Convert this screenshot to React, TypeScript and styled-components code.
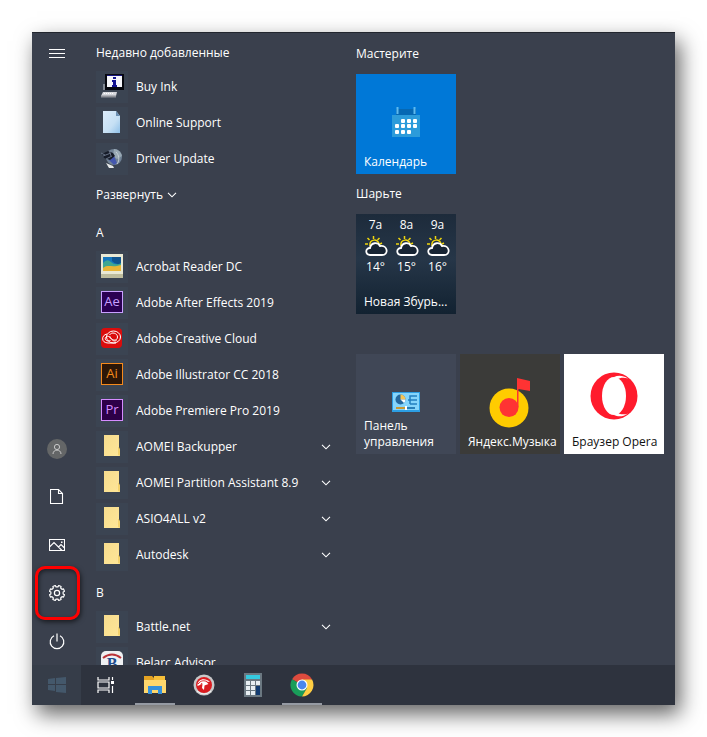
import React from "react";
import styled, { createGlobalStyle } from "styled-components";

const GlobalStyle = createGlobalStyle`
  * { box-sizing: border-box; }
  body { margin: 0; background: #fff; }
  button { font: inherit; color: inherit; border: 0; padding: 0; margin: 0; background: none; cursor: pointer; }
  h2, h3, ul, p { margin: 0; padding: 0; font-weight: 400; font-size: 12px; list-style: none; }
  svg { display: block; flex: none; }
`;

const Desktop = styled.main`
  height: 100vh;
  padding: 32px;
  overflow: hidden;
  font-family: "Open Sans", "Noto Sans", sans-serif;
  font-size: 12px;
  line-height: 16px;
  color: #fff;
`;

const Shell = styled.div`
  height: 100%;
  display: flex;
  flex-direction: column;
  background: #3a404d;
  box-shadow: 5px 9px 20px 0 rgba(0, 0, 0, 0.62);
`;

const StartMenu = styled.div`
  flex: 1;
  min-height: 0;
  display: grid;
  grid-template-columns: 50px 273px 1fr;
  border-top: 1px solid #22262e;
  overflow: hidden;
`;

const Rail = styled.nav`
  display: flex;
  flex-direction: column;
  justify-content: space-between;
  min-height: 0;
`;

const RailGroup = styled.div`
  display: flex;
  flex-direction: column;
`;

const RailButton = styled.button<{ $highlight?: boolean; $short?: boolean }>`
  position: relative;
  height: ${(p) => (p.$short ? 41 : 48)}px;
  display: flex;
  align-items: center;
  justify-content: center;
  ${(p) =>
    p.$highlight &&
    `&::after {
      content: "";
      position: absolute;
      inset: -3px 2px -3px 3px;
      border: 3px solid #f00;
      border-radius: 10px;
      box-shadow: 1px 2px 5px rgba(0, 0, 0, 0.6), inset 1px 2px 4px rgba(0, 0, 0, 0.5);
    }`}
`;

const AppList = styled.section`
  min-height: 0;
  overflow: hidden;
  padding-left: 14px;
`;

const ListHeading = styled.h2`
  height: 36px;
  display: flex;
  align-items: center;
  padding-top: 4px;
`;

const ExpandButton = styled.button`
  height: 36px;
  display: flex;
  align-items: center;
  gap: 4px;
`;

const AppRow = styled.button`
  width: 100%;
  height: 36px;
  display: flex;
  align-items: center;
  gap: 8px;
  padding-right: 24px;
  text-align: left;
`;

const IconPlate = styled.span`
  width: 32px;
  height: 32px;
  display: flex;
  align-items: center;
  justify-content: center;
  padding-bottom: 2px;
  background: #3b4452;
`;

const RowLabel = styled.span`
  flex: 1;
  white-space: nowrap;
`;

const AdobeBadge = styled.span<{ $fg: string; $bg: string }>`
  width: 22px;
  height: 22px;
  border: 1px solid ${(p) => p.$fg};
  background: ${(p) => p.$bg};
  color: ${(p) => p.$fg};
  font-size: 13px;
  line-height: 18px;
  text-align: center;
`;

const Tiles = styled.section`
  min-width: 0;
  padding: 1px 0 0 1px;
`;

const TileHeading = styled.h3`
  height: 40px;
  display: flex;
  align-items: center;
`;

const TileRow = styled.div`
  display: flex;
  gap: 4px;
`;

const Tile = styled.button<{ $bg: string; $dark?: boolean }>`
  width: 100px;
  height: 100px;
  display: flex;
  flex-direction: column;
  align-items: center;
  justify-content: flex-end;
  padding-bottom: 4px;
  background: ${(p) => p.$bg};
  color: ${(p) => (p.$dark ? "#111" : "#fff")};
`;

const TileArt = styled.span<{ $gap: number }>`
  flex: 1;
  display: flex;
  align-items: flex-end;
  padding-bottom: ${(p) => p.$gap}px;
`;

const TileLabel = styled.span`
  width: 100%;
  padding-left: 8px;
  text-align: left;
  white-space: pre;
`;

const Forecast = styled.span`
  width: 100%;
  flex: 1;
  display: grid;
  grid-template-columns: repeat(3, 31px);
  padding: 3px 4px 0;
`;

const Hour = styled.span`
  display: flex;
  flex-direction: column;
  align-items: center;
  gap: 2px;
`;

const Taskbar = styled.footer`
  flex: none;
  height: 40px;
  display: flex;
  background: #2e333e;
`;

const TaskButton = styled.button<{ $active?: boolean; $start?: boolean }>`
  width: 49px;
  display: flex;
  align-items: center;
  justify-content: center;
  background: ${(p) => (p.$start ? "#363d49" : "transparent")};
  position: relative;
  ${(p) =>
    p.$active &&
    `&::after {
      content: "";
      position: absolute;
      bottom: 0;
      left: 5px;
      right: 4px;
      height: 2px;
      background: #959aa3;
    }`}
`;

const Chevron = () => (
  <svg width="10" height="6" viewBox="0 0 10 6" fill="none" stroke="#fff" strokeWidth="1.1" aria-hidden="true">
    <path d="M1 .8 5 4.8 9 .8" />
  </svg>
);

const MenuIcon = () => (
  <svg width="16" height="12" viewBox="0 0 16 12" fill="none" stroke="#fff" aria-hidden="true">
    <path d="M0 1.5h16M0 5.5h16M0 9.5h16" />
  </svg>
);

const UserIcon = () => (
  <svg width="20" height="20" viewBox="0 0 20 20" fill="none" stroke="#c8c8c8" aria-hidden="true">
    <circle cx="10" cy="10" r="10" fill="#646667" stroke="none" />
    <circle cx="10" cy="8" r="2.6" />
    <path d="M6 15c0-5.2 8-5.2 8 0" />
  </svg>
);

const DocumentIcon = () => (
  <svg width="14" height="18" viewBox="0 0 14 18" fill="none" stroke="#fff" strokeWidth="1.1" aria-hidden="true">
    <path d="M.5 1.500h8l4 4v10H.5zM8.500 1.500v4h4" />
  </svg>
);

const PictureIcon = () => (
  <svg width="16" height="14" viewBox="0 0 16 14" fill="none" stroke="#fff" strokeWidth="1.1" aria-hidden="true">
    <path d="M.5 1.500h15v11H.5zM.5 9 5 4.500l8 8M9.500 9 12 6.500l3.500 3.500" />
    <path d="M12 3.500h1.500V5H12z" fill="#fff" stroke="none" />
  </svg>
);

const gearPath = (() => {
  const pts: string[] = [];
  for (let i = 0; i < 8; i++) {
    const a = (i * Math.PI) / 4 + Math.PI / 8;
    [[-0.24, 6.2], [-0.17, 7.7], [0.17, 7.7], [0.24, 6.2]].forEach(([d, r]) => {
      pts.push(`${(8 + Math.sin(a + d) * r).toFixed(2)} ${(8 - Math.cos(a + d) * r).toFixed(2)}`);
    });
  }
  return `M${pts.join("L")}Z`;
})();

const GearIcon = () => (
  <svg width="16" height="16" viewBox="0 0 16 16" fill="none" stroke="#fff" strokeWidth="1.2" strokeLinejoin="round" aria-hidden="true">
    <path d={gearPath} />
    <circle cx="8" cy="8" r="2.6" />
  </svg>
);

const PowerIcon = () => (
  <svg width="16" height="17" viewBox="0 0 16 17" fill="none" stroke="#fff" strokeWidth="1.2" aria-hidden="true">
    <path d="M8 .5v8M5 2.7a6.8 6.8 0 1 0 6 0" />
  </svg>
);

const InfoPcIcon = () => (
  <svg width="24" height="26" viewBox="0 0 24 26" aria-hidden="true">
    <path d="M5 1h19v16H5z" fill="#06080f" />
    <path d="M7 3h15v11H7z" fill="#f5f6fa" />
    <path d="M7 2h15v1H7z" fill="#15157e" />
    <path d="M13 4h3v2h-3zM12 7h4v5h1v2h-5v-2h1V9h-1z" fill="#12128f" />
    <path d="M4 11v6" fill="none" stroke="#c9cdd4" />
    <path d="M3 19h14l-1 4H1z" fill="#d6d7dc" />
    <path d="M1 22.5h15v2H1z" fill="#8f9198" />
    <path d="M4 20.5h10" stroke="#fff" strokeDasharray="1 1" />
  </svg>
);

const PageIcon = () => (
  <svg width="18" height="23" viewBox="0 0 18 23" aria-hidden="true">
    <defs>
      <linearGradient id="page" x2="1" y2="1">
        <stop stopColor="#dcecfb" />
        <stop offset=".6" stopColor="#c6e0f4" />
        <stop offset="1" stopColor="#8fc0e8" />
      </linearGradient>
    </defs>
    <path d="M0 0h13l4 5v17H0z" fill="url(#page)" />
    <path d="m13 0 4 5h-4z" fill="#6b8fb2" />
  </svg>
);

const DriverIcon = () => (
  <svg width="22" height="22" viewBox="0 0 22 22" aria-hidden="true">
    <circle cx="13" cy="10" r="8" fill="#718295" />
    <path d="M13 2c4 0 7 3 8 7l-5 3-4-3z" fill="#98a8b4" />
    <path d="m8 13 5-4 3 7-3 2z" fill="#4457ae" />
    <path d="M15 5c3 3 4 8 1 12" fill="none" stroke="#c5d0d6" />
    <path d="m1 7 6-3 5 2 2 3-5 4-6-2z" fill="#171c29" />
    <path d="m2 9 8-3M5 12l6-3M0 6l4 2M8 3l2 6" stroke="#657084" />
    <path d="m5 16 7 3 1 2H8z" fill="#e6e9e9" />
  </svg>
);

const PhotoIcon = () => (
  <svg width="22" height="24" viewBox="0 0 22 24" aria-hidden="true">
    <path d="M0 0h22v24H0z" fill="#e9e9d4" />
    <path d="M0 20h22v4H0z" fill="#bdbc9d" />
    <path d="M2 3h18v14H2z" fill="#1677bd" />
    <path d="M2 9q4-5 8-1t10 1v5H2z" fill="#40a790" />
    <path d="M11 3h9v6q-4 3-9-2z" fill="#105590" />
    <path d="M2 14c5-4 9 0 18-3v6H2z" fill="#e8b535" />
  </svg>
);

const CreativeCloudIcon = () => (
  <svg width="22" height="20" viewBox="0 0 22 20" fill="none" stroke="#fff" aria-hidden="true">
    <rect width="21" height="20" rx="4" fill="#db0c0c" stroke="none" />
    <ellipse cx="12.5" cy="9" rx="7" ry="6" />
    <path d="M6 6C0 7 0 15 7 15h8" />
    <path d="M15.5 12.500c-3 1.500-5-1-7-3.500-3-2.500-6 2-3 3.500 2 1 3.500 0 4 0" />
    <path d="M8.500 7c2-3.500 8-2 8 2s-5 4-7 .500L8.500 8" />
  </svg>
);

const FolderIcon = () => (
  <svg width="18" height="22" viewBox="0 0 18 22" aria-hidden="true">
    <defs>
      <linearGradient id="folder" x2="1" y2="1">
        <stop stopColor="#f6dc8e" />
        <stop offset="1" stopColor="#ffe797" />
      </linearGradient>
    </defs>
    <path d="M1 0h15v13l1 2v6H1z" fill="url(#folder)" />
    <path d="M15 12h1l1 3v6l-2-1z" fill="#f3d16c" />
    <path d="M13.500 1v17" stroke="#fae09a" />
  </svg>
);

const BelarcIcon = () => (
  <svg width="22" height="22" viewBox="0 0 22 22" aria-hidden="true">
    <rect width="22" height="22" rx="5" fill="#eef0f2" />
    <path d="M2 7q9-7 18 0" fill="none" stroke="#ba3338" strokeWidth="2" />
    <text x="11" y="18" textAnchor="middle" fill="#1d4c8f" fontFamily="Liberation Serif, serif" fontWeight="700" fontSize="16">B</text>
  </svg>
);

const CalendarIcon = () => (
  <svg width="30" height="32" viewBox="0 0 30 32" aria-hidden="true">
    <path d="M5 3h20v6H5z" fill="#0668b3" />
    <path d="M6.500 1v7M23.500 1v7" stroke="#5db9ef" strokeWidth="2" />
    <path d="M1 9h28v22H1z" fill="#2c9bda" />
    <g fill="#fff">
      {[[12, 15], [18, 15], [24, 15], [6, 20], [12, 20], [18, 20], [24, 20], [6, 26], [12, 26], [18, 26]].map(([x, y]) => (
        <rect key={`${x}-${y}`} x={x - 2} y={y - 2} width="4" height="4" rx="1" />
      ))}
    </g>
  </svg>
);

const WeatherIcon = () => (
  <svg width="24" height="22" viewBox="0 0 24 22" fill="none" aria-hidden="true">
    <path d="M6 11c-1-7 8-8 9-2M9.500 1v3M3.500 3l2 2M15.500 3l-2 2M1 9h3M18 8l-2 1" stroke="#f0d60d" strokeWidth="1.500" />
    <path d="M6 20c-5-.4-5-7 0-7 1-6 8-6 10-2 8-1 9 9 2 9z" fill="#172433" stroke="#fff" strokeWidth="1.800" />
  </svg>
);

const ControlPanelIcon = () => (
  <svg width="28" height="20" viewBox="0 0 28 20" aria-hidden="true">
    <path d="M0 0h28v20H0z" fill="#2c9ee3" />
    <path d="M1 1h26v17H1z" fill="#85d5fb" />
    <circle cx="8.500" cy="7.500" r="5" fill="#25689d" />
    <path d="M8.500 7.500v-5a5 5 0 0 1 5 5z" fill="#f4c455" />
    <path d="M8.500 7.500h5a5 5 0 0 1-1.500 3.500z" fill="#fff" />
    <path d="M16 8h2V4h7M18 8h7M18 12h7M18 4v8" fill="none" stroke="#227fc0" strokeWidth="1.500" />
    <path d="M4 16h10" stroke="#c89833" strokeWidth="2" />
    <path d="M14 16h9" stroke="#287fb9" strokeWidth="2" />
    <path d="M13 14h2v4h-2z" fill="#fff" />
  </svg>
);

const MusicIcon = () => (
  <svg width="42" height="52" viewBox="0 0 42 52" aria-hidden="true">
    <circle cx="20" cy="32" r="19.500" fill="#fc0" />
    <circle cx="20" cy="31.500" r="9.500" fill="#f33" />
    <path d="M28 2v29h1.500V13L41 15V5z" fill="#f33" />
  </svg>
);

const OperaIcon = () => (
  <svg width="48" height="48" viewBox="0 0 48 48" aria-hidden="true">
    <circle cx="24" cy="24" r="23.500" fill="#ff1b2d" />
    <ellipse cx="24" cy="24" rx="12" ry="19" fill="#fff" />
    <path d="M24 5c4-2 9-2 14 1.500-4-1.500-8-1-11 1zM24 43c4 2 9 2 14-1.500-4 1.500-8 1-11-1z" fill="#fff" />
  </svg>
);

const WindowsIcon = () => (
  <svg width="18" height="16" viewBox="0 0 18 16" fill="#44586b" aria-hidden="true">
    <path d="m0 2 7-1v6H0zM8 1l10-1v7H8zM0 8h7v6l-7-1zM8 8h10v8L8 15z" />
  </svg>
);

const TaskViewIcon = () => (
  <svg width="18" height="16" viewBox="0 0 18 16" fill="none" stroke="#fff" strokeWidth="1.200" aria-hidden="true">
    <path d="M1 0v3h11V0M1 5h11v6H1zM1 16v-3h11v3M15.500 0v3M15.500 9v7" />
    <path d="M14 4h3v3h-3z" fill="#fff" stroke="none" />
  </svg>
);

const ExplorerIcon = () => (
  <svg width="22" height="20" viewBox="0 0 22 20" aria-hidden="true">
    <path d="M0 1h8l2 2h11v6H0z" fill="#e4a323" />
    <path d="M10 1h11v5H10z" fill="#f6bf39" />
    <path d="M0 5h22v13H0z" fill="#ffd86d" />
    <path d="M4 19v-8h14v8h-4v-4H8v4z" fill="#3591dc" />
  </svg>
);

const PocketIcon = () => (
  <svg width="22" height="22" viewBox="0 0 22 22" aria-hidden="true">
    <circle cx="11" cy="11" r="10.500" fill="#c7c8c9" />
    <circle cx="11" cy="11" r="8" fill="#da1c20" />
    <path d="M4.500 12C4 5 12 3 17 8l-4-.500 2.500 2.500-4 1.500-.500 4.500-2-2 .500-4z" fill="#fff" />
    <path d="M5 10c3-4 6-3.500 9-2.500M6 14l3-5" fill="none" stroke="#da1c20" />
    <path d="M4 17q7 6 14 0" fill="none" stroke="#f5f5f5" />
  </svg>
);

const CalculatorIcon = () => (
  <svg width="18" height="24" viewBox="0 0 18 24" aria-hidden="true">
    <path d="M0 0h18v24H0z" fill="#6b7881" />
    <path d="M2 2h14v4H2z" fill="#35cbe0" />
    <path d="M2 8h4v4H2zM7 8h4v4H7zM12 8h4v4h-4zM2 13h4v4H2zM7 13h4v4H7zM2 18h4v4H2zM7 18h4v4H7z" fill="#e7eef2" />
    <path d="M12 13h4v9h-4z" fill="#123b70" />
  </svg>
);

const ChromeIcon = () => (
  <svg width="24" height="24" viewBox="0 0 24 24" aria-hidden="true">
    <path d="M12 12 2.040 6.250A11.500 11.500 0 0 1 21.960 6.250z" fill="#dd4b3e" />
    <path d="M12 12 2.040 6.250A11.500 11.500 0 0 0 12 23.500l5-8.500z" fill="#199d5a" />
    <path d="M12 6.500h10.100A11.500 11.500 0 0 1 12 23.500l5-8.500z" fill="#ffce43" />
    <circle cx="12" cy="12" r="5.500" fill="#fff" />
    <circle cx="12" cy="12" r="4.400" fill="#4a86ed" />
  </svg>
);

type AppEntry = { name: string; icon: React.ReactNode; folder?: boolean };

const recent: AppEntry[] = [
  { name: "Buy Ink", icon: <InfoPcIcon /> },
  { name: "Online Support", icon: <PageIcon /> },
  { name: "Driver Update", icon: <DriverIcon /> },
];

const groups: { letter: string; apps: AppEntry[] }[] = [
  {
    letter: "A",
    apps: [
      { name: "Acrobat Reader DC", icon: <PhotoIcon /> },
      { name: "Adobe After Effects 2019", icon: <AdobeBadge $fg="#c8a0ff" $bg="#2a0052">Ae</AdobeBadge> },
      { name: "Adobe Creative Cloud", icon: <CreativeCloudIcon /> },
      { name: "Adobe Illustrator CC 2018", icon: <AdobeBadge $fg="#f58a1c" $bg="#2b1608">Ai</AdobeBadge> },
      { name: "Adobe Premiere Pro 2019", icon: <AdobeBadge $fg="#d58cff" $bg="#2d0048">Pr</AdobeBadge> },
      { name: "AOMEI Backupper", icon: <FolderIcon />, folder: true },
      { name: "AOMEI Partition Assistant 8.9", icon: <FolderIcon />, folder: true },
      { name: "ASIO4ALL v2", icon: <FolderIcon />, folder: true },
      { name: "Autodesk", icon: <FolderIcon />, folder: true },
    ],
  },
  {
    letter: "B",
    apps: [
      { name: "Battle.net", icon: <FolderIcon />, folder: true },
      { name: "Belarc Advisor", icon: <BelarcIcon /> },
    ],
  },
];

const hours = [
  { time: "7a", temp: "14°" },
  { time: "8a", temp: "15°" },
  { time: "9a", temp: "16°" },
];

const AppRows = ({ apps }: { apps: AppEntry[] }) => (
  <ul>
    {apps.map((app) => (
      <li key={app.name}>
        <AppRow type="button">
          <IconPlate>{app.icon}</IconPlate>
          <RowLabel>{app.name}</RowLabel>
          {app.folder && <Chevron />}
        </AppRow>
      </li>
    ))}
  </ul>
);

export default function App() {
  return (
    <>
      <GlobalStyle />
      <Desktop>
        <Shell>
          <StartMenu>
            <Rail>
              <RailButton type="button" $short aria-label="Меню"><MenuIcon /></RailButton>
              <RailGroup>
                <RailButton type="button" aria-label="Учётная запись"><UserIcon /></RailButton>
                <RailButton type="button" aria-label="Документы"><DocumentIcon /></RailButton>
                <RailButton type="button" aria-label="Изображения"><PictureIcon /></RailButton>
                <RailButton type="button" $highlight aria-label="Параметры"><GearIcon /></RailButton>
                <RailButton type="button" aria-label="Выключение"><PowerIcon /></RailButton>
              </RailGroup>
            </Rail>
            <AppList>
              <ListHeading>Недавно добавленные</ListHeading>
              <AppRows apps={recent} />
              <ExpandButton type="button">Развернуть <Chevron /></ExpandButton>
              {groups.map((group) => (
                <React.Fragment key={group.letter}>
                  <ListHeading>{group.letter}</ListHeading>
                  <AppRows apps={group.apps} />
                </React.Fragment>
              ))}
            </AppList>
            <Tiles>
              <TileHeading>Мастерите</TileHeading>
              <TileRow>
                <Tile type="button" $bg="#0078d7">
                  <TileArt $gap={16}><CalendarIcon /></TileArt>
                  <TileLabel>Календарь</TileLabel>
                </Tile>
              </TileRow>
              <TileHeading>Шарьте</TileHeading>
              <TileRow>
                <Tile type="button" $bg="linear-gradient(180deg, #1d2b3b, #263648 45%, #122231)">
                  <Forecast>
                    {hours.map((hour) => (
                      <Hour key={hour.time}>
                        <span>{hour.time}</span>
                        <WeatherIcon />
                        <span>{hour.temp}</span>
                      </Hour>
                    ))}
                  </Forecast>
                  <TileLabel>Новая Збурь...</TileLabel>
                </Tile>
              </TileRow>
              <TileHeading aria-hidden="true" />
              <TileRow>
                <Tile type="button" $bg="#404756">
                  <TileArt $gap={6}><ControlPanelIcon /></TileArt>
                  <TileLabel>{"Панель\nуправления"}</TileLabel>
                </Tile>
                <Tile type="button" $bg="#3b3b39">
                  <TileArt $gap={6}><MusicIcon /></TileArt>
                  <TileLabel>Яндекс.Музыка</TileLabel>
                </Tile>
                <Tile type="button" $bg="#fff" $dark>
                  <TileArt $gap={14}><OperaIcon /></TileArt>
                  <TileLabel>Браузер Opera</TileLabel>
                </Tile>
              </TileRow>
            </Tiles>
          </StartMenu>
          <Taskbar>
            <TaskButton type="button" $start aria-label="Пуск"><WindowsIcon /></TaskButton>
            <TaskButton type="button" aria-label="Представление задач"><TaskViewIcon /></TaskButton>
            <TaskButton type="button" $active aria-label="Проводник"><ExplorerIcon /></TaskButton>
            <TaskButton type="button" aria-label="Утилита"><PocketIcon /></TaskButton>
            <TaskButton type="button" aria-label="Калькулятор"><CalculatorIcon /></TaskButton>
            <TaskButton type="button" $active aria-label="Google Chrome"><ChromeIcon /></TaskButton>
          </Taskbar>
        </Shell>
      </Desktop>
    </>
  );
}
